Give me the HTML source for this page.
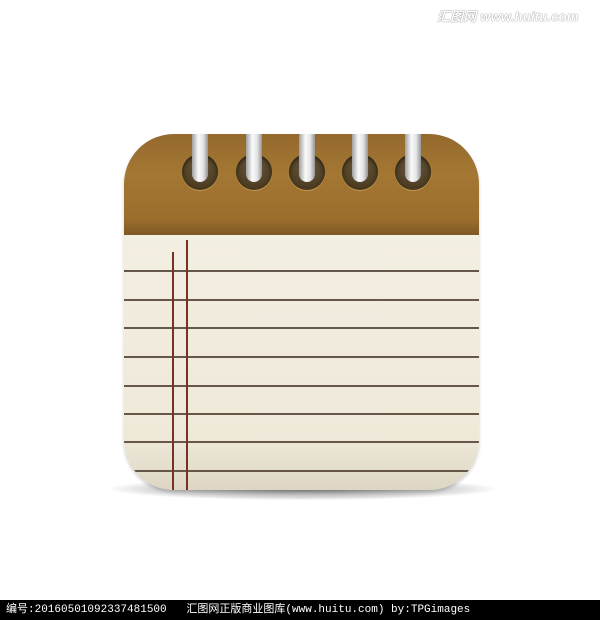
<!DOCTYPE html>
<html><head><meta charset="utf-8"><style>
html,body{margin:0;padding:0;width:600px;height:620px;background:#fff;overflow:hidden;position:relative;font-family:"Liberation Sans","Noto Sans CJK SC",sans-serif}
.wm{position:absolute;left:437px;top:6px;font-size:13px;font-weight:bold;font-style:italic;color:#fff;text-shadow:0 0 1px #888,0 0 1px #888;letter-spacing:0.2px}
.shadow{position:absolute;left:110px;top:478px;width:385px;height:22px;border-radius:50%;background:radial-gradient(ellipse at center,rgba(0,0,0,.45),rgba(0,0,0,.15) 55%,rgba(0,0,0,0) 72%)}
.icon{position:absolute;left:124px;top:134px;width:355px;height:356px;border-radius:50px;overflow:hidden;background:linear-gradient(#f5f1e6,#efe9da 85%,#ddd6c4);box-shadow:0 2px 3px rgba(0,0,0,.2)}
.top{position:absolute;left:0;top:0;width:100%;height:101px;background:linear-gradient(#94692d,#a47833 40%,#9a6d2c 85%,#7d5723);}
.line{position:absolute;left:0;width:100%;height:2px;background:#65584a}
.red{position:absolute;top:118px;bottom:0;width:1.5px;background:#7a3022}
.hole{position:absolute;top:20px;width:36px;height:36px;border-radius:50%;background:radial-gradient(circle at 50% 40%,#6b5a3e,#4a3a20 70%);box-shadow:0 1px 0 #c49a56,inset 0 2px 3px rgba(0,0,0,.5)}
.ring{position:absolute;top:0;width:16px;height:48px;border-radius:0 0 8px 8px;background:linear-gradient(90deg,#a0a0a0,#fafafa 40%,#e4e4e4 70%,#959595)}
.bar{position:absolute;left:0;top:600px;width:600px;height:20px;background:#000;color:#fff;font-size:11px;line-height:20px;padding-left:6px;font-family:"Liberation Mono","WenQuanYi Zen Hei",monospace;white-space:pre}
</style></head><body>
<div class="wm">汇图网 www.huitu.com</div>
<div class="shadow"></div>
<div class="icon">
  <div class="top"></div>
  <div class="hole" style="left:58px"></div>
  <div class="hole" style="left:112px"></div>
  <div class="hole" style="left:165px"></div>
  <div class="hole" style="left:218px"></div>
  <div class="hole" style="left:271px"></div>
  <div class="ring" style="left:68px"></div>
  <div class="ring" style="left:122px"></div>
  <div class="ring" style="left:175px"></div>
  <div class="ring" style="left:228px"></div>
  <div class="ring" style="left:281px"></div>
  <div class="line" style="top:136px"></div>
  <div class="line" style="top:165px"></div>
  <div class="line" style="top:193px"></div>
  <div class="line" style="top:222px"></div>
  <div class="line" style="top:251px"></div>
  <div class="line" style="top:279px"></div>
  <div class="line" style="top:307px"></div>
  <div class="line" style="top:336px"></div>
  <div class="red" style="left:48px"></div>
  <div class="red" style="left:62px;top:106px"></div>
</div>
<div class="bar">编号:20160501092337481500   汇图网正版商业图库(www.huitu.com) by:TPGimages</div>
</body></html>
